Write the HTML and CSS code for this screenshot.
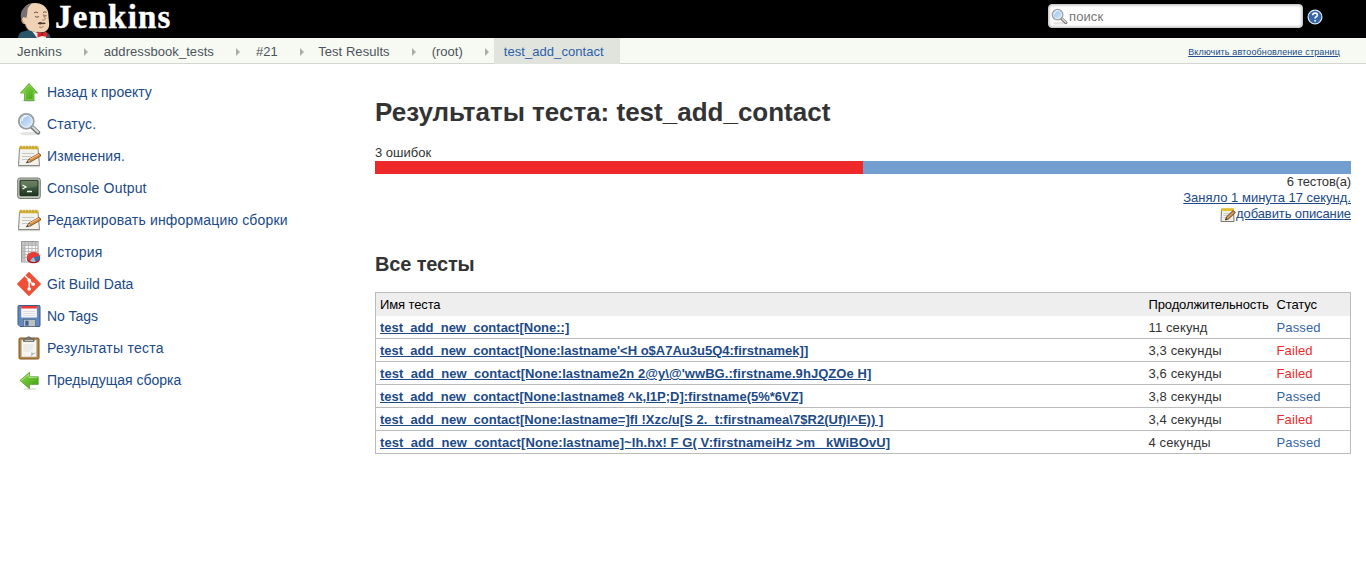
FILE: index.html
```html
<!DOCTYPE html>
<html lang="ru">
<head>
<meta charset="utf-8">
<title>Jenkins</title>
<link rel="stylesheet" href="styles.css">
</head>
<body>
<svg class="defs" width="0" height="0" aria-hidden="true">
  <defs>
    <linearGradient id="green" x1="0" y1="0" x2="1" y2="1"><stop offset="0" stop-color="#8bd94a"/><stop offset="1" stop-color="#3fa010"/></linearGradient>
    <linearGradient id="screen" x1="0" y1="0" x2="0" y2="1"><stop offset="0" stop-color="#61775a"/><stop offset="1" stop-color="#1c3520"/></linearGradient>
    <linearGradient id="lens" x1="0" y1="0" x2="1" y2="1"><stop offset="0" stop-color="#8db9ea"/><stop offset="1" stop-color="#e4f1fd"/></linearGradient>
    <symbol id="search" viewBox="0 0 24 24">
      <ellipse cx="12" cy="21.500" rx="9" ry="1.800" fill="#e4e4e2"/>
      <path d="M14.500 14.500l6.500 6" stroke="#73777a" stroke-width="4.400" stroke-linecap="round"/>
      <path d="M15.500 15l5.500 5" stroke="#d8dadb" stroke-width="2" stroke-linecap="round"/>
      <circle cx="9.300" cy="9.300" r="7.400" fill="url(#lens)" stroke="#999ea1" stroke-width="2"/>
      <circle cx="9.300" cy="9.300" r="6" fill="none" stroke="#eef5fb" stroke-width="1"/>
      <path d="M5 9c0-3 2-4.500 4.500-4.500" stroke="#fff" stroke-width="1.200" fill="none"/>
    </symbol>
    <symbol id="note" viewBox="0 0 24 24">
      <path d="M1 22.500h22" stroke="#d4d4cf" stroke-width="1.500"/>
      <path d="M2.500 4h18.500l1.500 17.500h-21z" fill="#f3f3ee" stroke="#858780"/>
      <path d="M2.200 2.300h19.300v3h-19.300z" fill="#d9b83a"/>
      <path d="M4 1.500v3.300M7 1.500v3.300M10 1.500v3.300M13 1.500v3.300M16 1.500v3.300M19 1.500v3.300" stroke="#a98a24" stroke-width=".8"/>
      <path d="M5 9.500h12M5 12.500h9M5 15.500h7" stroke="#c6c7c2"/>
      <path d="M9.500 18.800l2.800-4 9.500-5.300q2.200.3 1.800 2.600l-9.700 5.600z" fill="#df8e3c" stroke="#6d4520" stroke-width=".8"/>
      <path d="M12.800 15.200l9.200-5" stroke="#f9c889"/>
      <path d="M9.500 18.800l2.800-4 1.600 2.900z" fill="#f1dcaf" stroke="#554327" stroke-width=".6"/>
      <path d="M9.500 18.800l1.200-1.700.8 1z" fill="#222"/>
    </symbol>
    <symbol id="note-small" viewBox="0 0 16 16">
      <path d="M1.500 2.500h12l.5 12h-13z" fill="#f1f1ec" stroke="#777970"/>
      <path d="M1.200 1.200h12.600v2.800h-12.600z" fill="#e2bd2c"/>
      <path d="M3.500 6.500h7M3.500 8.500h5M3.500 10.500h3" stroke="#c0c1bc" stroke-width=".8"/>
      <path d="M5.500 13l1.200-3.300 6.300-6 2.400 1.700-6.600 6.300z" fill="#d99b50" stroke="#4a3218" stroke-width=".9"/>
      <path d="M5.500 13l.5-1.500 1 .9z" fill="#111"/>
    </symbol>
    <symbol id="up" viewBox="0 0 24 24">
      <ellipse cx="12" cy="20.500" rx="7" ry="1.500" fill="#d9dcd5"/>
      <path d="M12 3.500l8.500 9.500h-3.500v7.500h-9.500v-7.500h-4z" fill="url(#green)" stroke="#4a9a22" stroke-width=".7" stroke-linejoin="round"/>
      <path d="M12 5l6.300 7.400h-2.200v7.300h-7.700v-7.300h-2.700z" stroke="#97dd63" stroke-width=".7" fill="none"/>
    </symbol>
    <symbol id="left" viewBox="0 0 24 24">
      <ellipse cx="13" cy="21" rx="7" ry="1.200" fill="#e2e6df"/>
      <path d="M3 12.500l9.500-8.200v4.500h8.700v7.600h-8.700v4.300z" fill="url(#green)" stroke="#589d36" stroke-width=".8" stroke-linejoin="round"/>
      <path d="M4.500 12.500l7.300-6.300v3.400h8.500" stroke="#b9ee90" stroke-width=".8" fill="none"/>
    </symbol>
    <symbol id="console" viewBox="0 0 24 24">
      <rect x=".7" y="2" width="22.600" height="20.500" rx="2.200" fill="#bfc2bb" stroke="#777c73"/>
      <rect x="3" y="4.300" width="18" height="15.400" rx=".5" fill="url(#screen)" stroke="#1d2d1c"/>
      <path d="M3.500 4.800h17v5.500q-8 3-17 1z" fill="#8aa37b" opacity=".3"/>
      <path d="M5.500 9l3.500 2-3.500 2M10 15.500h5" stroke="#f0fff0" stroke-width="1.300" fill="none"/>
    </symbol>
    <symbol id="history" viewBox="0 0 24 24">
      <rect x="4.500" y="1.500" width="16.500" height="20.500" fill="#fafafa" stroke="#999"/>
      <path d="M5 2h16v3.200h-16zM5 2h3.200v20h-3.200z" fill="#c4c4c4"/>
      <path d="M8 2v20M11.500 2v20M15 2v20M18.500 2v20M5 5.500h16M5 8.500h16M5 11.500h16M5 14.500h16M5 17.500h16" stroke="#b0b0b0" stroke-width=".8"/>
      <ellipse cx="16.500" cy="18.700" rx="6.700" ry="4.500" fill="#aa1616"/>
      <ellipse cx="16.500" cy="17" rx="6.700" ry="5" fill="#e43c36"/>
      <path d="M16.500 17l6.500-1q.8 4.300-4.300 5.700z" fill="#3c6dac"/>
      <path d="M16.500 17l2.200 4.700q-3 .6-5.700-.8z" fill="#91c2e3"/>
    </symbol>
    <symbol id="git" viewBox="0 0 24 24">
      <path d="M12 .8l11.200 11.200-11.200 11.200-11.200-11.200z" fill="#ef5036" stroke="#ef5036" stroke-width="1.500" stroke-linejoin="round"/>
      <path d="M8 3.700l4.200 4.200v9M12.200 8.500l4 4" fill="none" stroke="#fff" stroke-width="1.400"/>
      <circle cx="12.200" cy="8.300" r="1.800" fill="#fff"/><circle cx="16.200" cy="12.300" r="1.800" fill="#fff"/><circle cx="12.200" cy="17" r="1.800" fill="#fff"/>
    </symbol>
    <symbol id="save" viewBox="0 0 24 24">
      <path d="M2 1.500h20q1 0 1 1v19q0 1-1 1h-19l-2-2v-18q0-1 1-1z" fill="#6089bf" stroke="#3f5a85"/>
      <rect x="4.200" y="2" width="15.700" height="11.500" fill="#f6f6f7"/>
      <rect x="4.200" y="2" width="15.700" height="2.500" fill="#e93b32"/>
      <path d="M6 7.500h12M6 9.500h12M6 11.500h12" stroke="#d0d2d4" stroke-width=".7"/>
      <rect x="6.500" y="15.500" width="12" height="7" fill="#bdc1c3" stroke="#55697e" stroke-width=".7"/>
      <rect x="8.300" y="16.700" width="3.200" height="5" fill="#3f5f8d"/>
    </symbol>
    <symbol id="clip" viewBox="0 0 24 24">
      <rect x="2" y="2" width="20" height="21" rx="1.200" fill="#ba863f" stroke="#80561f"/>
      <path d="M4.300 4h15.400v17h-15.400z" fill="#f5f5f2" stroke="#a5a49f" stroke-width=".6"/>
      <path d="M6.500 9h10M6.500 11h10M6.500 13h9M6.500 15h7" stroke="#dadad8" stroke-width=".7"/>
      <path d="M13 21q2-2 1-4.500 3 1 5.700-.5z" fill="#b8b9b5"/>
      <path d="M6.500 5.500v-2q0-1 2-1h1.200q.2-1.800 2.100-1.800t2.100 1.800h1.300q1.800 0 1.800 1v2z" fill="#777a75" stroke="#555" stroke-width=".6"/>
      <path d="M8 4.500h8" stroke="#bfc1bd"/>
    </symbol>
  </defs>
</svg>

<header class="header">
  <a class="logo">
    <svg class="butler" viewBox="0 0 33 38">
      <path d="M0 38q.5-5.500 5-6.500l7-1.500 8 3 9-.5q3 1 3.500 5.500z" fill="#2b5568"/>
      <path d="M14 31l6 2 8 0 0 5h-9z" fill="#eeeae4"/>
      <path d="M10 30q-2-3-3-6-3.500 0-3.500-4 0-2.500 1.500-3Q4 7 11 4q8-2.500 14 1 6 4 5.500 12l.7 7q0 6-5 8-8 1.500-16.200-2z" fill="#f0d2b5"/>
      <path d="M3 19q-1-7 2-10 4-5 9-5.500Q9 7 9.300 13l-.8 5-3-1z" fill="#77726f"/>
      <path d="M5 17q-2 2-.5 5l2 1M7 24q1 4 4 6" fill="none" stroke="#9c7460" stroke-width=".8"/>
      <path d="M16 13q2-1.800 4-.3M25 12.500q2-1.500 3.500 0M17 16.500q2 1.500 4 0M25.500 16l3-.3" fill="none" stroke="#5a473b" stroke-width=".9"/>
      <path d="M25 14l2.500 5q-1 1.800-3.500 1" fill="none" stroke="#a9775d" stroke-width=".9"/>
      <path d="M19.500 23.500q2.500-2.500 5-.8 2.300-.6 3.500.5-2 1.300-4 .9-2 1-4.500-.6z" fill="#4b382f"/>
      <path d="M21 27q2.500 1 4.500-.5" stroke="#9d5c4d" stroke-width=".8" fill="none"/>
      <path d="M19.500 31.500l4 1.700 5-1.700.8 5.500-5.300-1-4.500 1.500z" fill="#e0262b"/>
      <circle cx="24" cy="34.500" r="1.300" fill="#941b22"/>
    </svg>
    <span class="wordmark">Jenkins</span>
  </a>
  <div class="tools">
    <div class="search"><svg class="search-icon"><use href="#search"/></svg><span>поиск</span></div>
    <svg class="help" viewBox="0 0 16 16"><circle cx="8" cy="8" r="6.900" fill="#3768ab" stroke="#dce8f5" stroke-width="1.200"/><path d="M5.700 6.200q.1-2.100 2.400-2.100 2.300 0 2.300 1.900 0 1.100-1.200 1.700-1.100.6-1.100 1.800M8.100 11v1.600" fill="none" stroke="#fff" stroke-width="1.600"/></svg>
  </div>
</header>

<nav class="crumbs">
  <a class="home">Jenkins</a><i class="sep"></i>
  <a class="job">addressbook_tests</a><i class="sep"></i>
  <a>#21</a><i class="sep near"></i>
  <a class="job">Test Results</a><i class="sep"></i>
  <a>(root)</a><i class="sep last"></i>
  <a class="current">test_add_contact</a>
  <a class="refresh">Включить автообновление страниц</a>
</nav>

<div class="page">
  <aside class="side">
    <a class="task"><svg><use href="#up"/></svg>Назад к проекту</a>
    <a class="task wide"><svg><use href="#search"/></svg>Статус.</a>
    <a class="task wide"><svg><use href="#note"/></svg>Изменения.</a>
    <a class="task wide"><svg><use href="#console"/></svg>Console Output</a>
    <a class="task wide"><svg><use href="#note"/></svg>Редактировать информацию сборки</a>
    <a class="task wide"><svg><use href="#history"/></svg>История</a>
    <a class="task"><svg><use href="#git"/></svg>Git Build Data</a>
    <a class="task"><svg><use href="#save"/></svg>No Tags</a>
    <a class="task wider"><svg><use href="#clip"/></svg>Результаты теста</a>
    <a class="task"><svg><use href="#left"/></svg>Предыдущая сборка</a>
  </aside>
  <main class="main">
    <h1>Результаты теста: test_add_contact</h1>
    <div class="failures">3 ошибок</div>
    <div class="bar"><div class="bar-failed" style="width:50%"></div></div>
    <div class="summary">
      <div class="total">6 тестов(а)</div>
      <a>Заняло 1 минута 17 секунд.</a>
      <div class="describe"><svg><use href="#note-small"/></svg><a>добавить описание</a></div>
    </div>
    <h2>Все тесты</h2>
    <table class="tests">
      <colgroup><col><col class="col-time"><col class="col-status"></colgroup>
      <thead><tr><th>Имя теста</th><th>Продолжительность</th><th>Статус</th></tr></thead>
      <tbody>
        <tr><td><a>test_add_new_contact[None::]</a></td><td>11 секунд</td><td class="passed">Passed</td></tr>
        <tr><td><a>test_add_new_contact[None:lastname'&lt;H o$A7Au3u5Q4:firstnamek]]</a></td><td>3,3 секунды</td><td class="failed">Failed</td></tr>
        <tr><td><a class="loose">test_add_new_contact[None:lastname2n 2@y\@'wwBG.:firstname.9hJQZOe H]</a></td><td>3,6 секунды</td><td class="failed">Failed</td></tr>
        <tr><td><a>test_add_new_contact[None:lastname8 ^k,I1P;D]:firstname(5%*6VZ]</a></td><td>3,8 секунды</td><td class="passed">Passed</td></tr>
        <tr><td><a class="slack">test_add_new_contact[None:lastname=]fl !Xzc/u[S 2._t:firstnamea\7$R2(Uf)I^E)) ]</a></td><td>3,4 секунды</td><td class="failed">Failed</td></tr>
        <tr><td><a class="looser">test_add_new_contact[None:lastname]~Ih.hx! F G( V:firstnameiHz &gt;m _kWiBOvU]</a></td><td>4 секунды</td><td class="passed">Passed</td></tr>
      </tbody>
    </table>
  </main>
</div>
</body>
</html>
```
FILE: styles.css
```css
* { box-sizing: border-box; }
body { margin: 0; background: #fff; color: #333; font: 13px/16px "Liberation Sans", Arial, sans-serif; font-variant-ligatures: none; }
.defs { display: block; }
.header { display: flex; justify-content: space-between; height: 38px; background: #000; padding-left: 18px; overflow: hidden; }
.logo { display: flex; gap: 4px; }
.butler { width: 33px; height: 38px; }
.wordmark { color: #fff; font: bold 33px/34px "Liberation Serif", serif; letter-spacing: 1.2px; -webkit-text-stroke: .4px #fff; }
.tools { display: flex; gap: 4px; align-items: flex-start; padding: 4px 43px 0 0; }
.search { display: flex; align-items: center; gap: 1px; width: 255px; height: 24px; padding-left: 2px; background: #fff; border: 1px solid #ccc; border-radius: 4px; box-shadow: inset 0 0 3px #aaa; color: #757575; letter-spacing: .1px; }
.search span { padding-top: 1px; }
.search-icon { width: 17px; height: 17px; }
.help { width: 16px; height: 16px; margin-top: 5px; }
.crumbs { display: flex; align-items: center; height: 26px; padding: 2px 26px 0 17px; background: #f6faf2; border-bottom: 1px solid #d3d7cf; color: #4d545d; white-space: nowrap; }
.home { letter-spacing: .1px; }
.job { letter-spacing: .06px; }
.sep { width: 4px; height: 0; margin: 0 16px 0 22px; border-left: 4px solid #abada9; border-top: 4px solid transparent; border-bottom: 4px solid transparent; }
.sep.near { margin-right: 14.5px; }
.sep.last { margin-right: 5px; }
.current { align-self: stretch; width: 126px; padding: 6px 0 0 10px; margin: -2px 0 -1px; background: #e0e4dc; color: #2d5fab; letter-spacing: .06px; }
.refresh { margin-left: auto; font-size: 9px; letter-spacing: .13px; color: #204a87; text-decoration: underline; }
.page { display: flex; }
.side { flex: none; width: 375px; padding: 12px 0 0 17px; }
.task { display: flex; align-items: center; gap: 6px; height: 32px; color: #204a87; font-size: 14px; white-space: nowrap; }
.task.wide { letter-spacing: .17px; }
.task.wider { letter-spacing: .26px; }
.task svg { width: 24px; height: 24px; }
.main { width: 976px; padding-top: 32px; }
h1 { margin: 0; font-size: 26px; line-height: 32px; color: #333; }
.failures { margin-top: 17px; }
.bar { display: flex; height: 13px; background: #729fcf; }
.bar-failed { background: #ef2929; }
.summary { display: flex; flex-direction: column; align-items: flex-end; }
.summary a { color: #204a87; text-decoration: underline; }
.total { letter-spacing: -.17px; }
.describe { display: flex; height: 16px; letter-spacing: -.1px; }
.describe svg { width: 16px; height: 16px; margin-top: 1px; }
h2 { margin: 30px 0 16px; font-size: 20px; line-height: 24px; letter-spacing: -.15px; }
.tests { width: 976px; table-layout: fixed; border-collapse: collapse; border: 1px solid #bbb; }
.col-time { width: 128px; }
.col-status { width: 78px; }
.tests th, .tests td { height: 23px; padding: 4px 4px 2px; text-align: left; white-space: nowrap; }
.tests th { background: #eee; color: #000; font-weight: normal; letter-spacing: -.12px; }
.tests td { border-bottom: 1px solid #bbb; letter-spacing: .12px; }
.tests td a { color: #204a87; font-weight: bold; text-decoration: underline; letter-spacing: 0; }
.tests td a.slack { letter-spacing: .025px; }
.tests td a.loose { letter-spacing: .06px; }
.tests td a.looser { letter-spacing: .08px; }
.tests .passed { color: #3465a4; }
.tests .failed { color: #ef2929; }
```
